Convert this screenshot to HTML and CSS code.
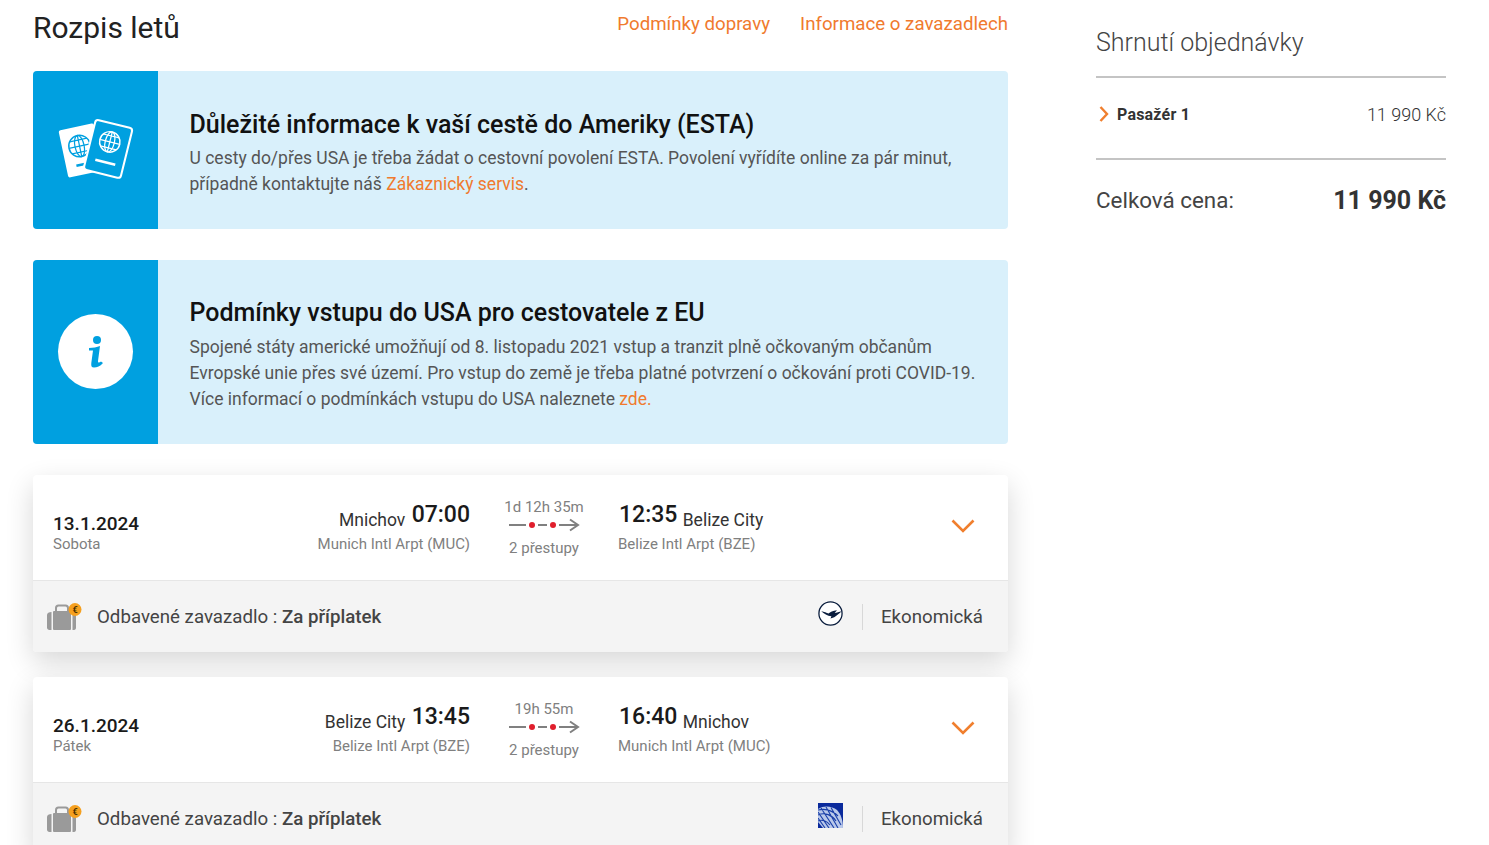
FILE: index.html
```html
<!doctype html>
<html>
<head>
<title>Rozpis letů</title>
<meta charset="UTF-8">
<link rel="stylesheet" href="styles.css">
</head>
<body>

<svg class="defs" width="0" height="0">
  <symbol id="bag" viewBox="0 0 36 28">
    <path d="M10 8V5C10 3.500 11 2.500 12.500 2.500h7C21 2.500 22 3.500 22 5V8" fill="none" stroke="#9a9a9a" stroke-width="2"/>
    <rect x="7" y="8" width="18" height="19" rx="1" fill="#9a9a9a"/>
    <path d="M5.500 9V27H3.500C2 27 1 26 1 24.500V12C1 10 3 9 5.500 9zM26.500 9V27h1.500C29.500 27 30 26 30 24.500V12C30 10 28.500 9 26.500 9z" fill="#9a9a9a"/>
    <circle cx="29" cy="6.500" r="6.500" fill="#f5a01f"/>
  </symbol>
  <symbol id="route" viewBox="0 0 72 14">
    <path d="M1 7h17M30 7h9M51 7h19M62 1.500 70 7l-8 5.500" fill="none" stroke="#808080" stroke-width="2"/>
    <circle cx="24" cy="7" r="3" fill="#e01f2d"/>
    <circle cx="45" cy="7" r="3" fill="#e01f2d"/>
  </symbol>
  <symbol id="chevron" viewBox="0 0 24 14">
    <path d="M1.500 1.500 12 12 22.500 1.500" fill="none" stroke="#f07f2e" stroke-width="2.600"/>
  </symbol>
</svg>

<div class="page">

  <main class="flights">

    <header class="head">
      <h1>Rozpis letů</h1>
      <nav class="head-links">
        <a href="#">Podmínky dopravy</a>
        <a href="#">Informace o zavazadlech</a>
      </nav>
    </header>

    <section class="notice notice-esta">
      <div class="notice-icon">
        <svg class="passports" width="78" height="66" viewBox="0 0 76 64">
          <g transform="translate(1 0) rotate(-12 22 34)">
            <rect x="5" y="10" width="35" height="47" rx="2" fill="#fff"/>
            <circle cx="22" cy="29" r="10.500" fill="none" stroke="#00a0e0" stroke-width="1.400"/>
            <ellipse cx="22" cy="29" rx="4.500" ry="10.500" fill="none" stroke="#00a0e0" stroke-width="1.200"/>
            <path d="M11.500 29h21M13.500 23h17M13.500 35h17M22 18.500v21" stroke="#00a0e0" stroke-width="1.200"/>
            <rect x="15" y="46" width="14" height="2.500" fill="#00a0e0"/>
          </g>
          <g transform="translate(-3 0) rotate(14 53 33)">
            <rect x="34" y="7" width="37" height="50" rx="3" fill="#00a0e0" stroke="#fff" stroke-width="2"/>
            <circle cx="52.500" cy="25" r="10" fill="none" stroke="#fff" stroke-width="1.400"/>
            <ellipse cx="52.500" cy="25" rx="4.500" ry="10" fill="none" stroke="#fff" stroke-width="1.200"/>
            <path d="M42.500 25h20M44.500 19h16M44.500 31h16M52.500 15v20" stroke="#fff" stroke-width="1.200"/>
            <rect x="43" y="44" width="20" height="2.500" fill="#fff"/>
          </g>
        </svg>
      </div>
      <div class="notice-body">
        <h2>Důležité informace k vaší cestě do Ameriky (ESTA)</h2>
        <p>U cesty do/přes USA je třeba žádat o cestovní povolení ESTA. Povolení vyřídíte online za pár minut, případně kontaktujte náš <a href="#">Zákaznický servis</a>.</p>
      </div>
    </section>

    <section class="notice notice-entry">
      <div class="notice-icon">
        <div class="info-circle">
          <svg width="18" height="33" viewBox="0 0 18 33">
            <circle cx="10" cy="5" r="4" fill="#00a0e0"/>
            <path d="M2 13C6 13 10 12 13 11L11 26C11 28 12 28 14 26.500L16 28C13 31.500 10 32.500 7 32.500 4.500 32.500 4 31 4.300 28L6 15.500H2z" fill="#00a0e0"/>
          </svg>
        </div>
      </div>
      <div class="notice-body">
        <h2>Podmínky vstupu do USA pro cestovatele z EU</h2>
        <p>Spojené státy americké umožňují od 8. listopadu 2021 vstup a tranzit plně očkovaným občanům Evropské unie přes své území. Pro vstup do země je třeba platné potvrzení o očkování proti COVID&#8209;19. Více informací o podmínkách vstupu do USA naleznete <a href="#">zde.</a></p>
      </div>
    </section>

    <article class="flight">
      <div class="flight-main">
        <div class="flight-date">
          <strong>13.1.2024</strong>
          <span>Sobota</span>
        </div>
        <div class="stop stop-from">
          <div class="stop-line">Mnichov <b>07:00</b></div>
          <span>Munich Intl Arpt (MUC)</span>
        </div>
        <div class="route">
          <span>1d 12h 35m</span>
          <svg width="72" height="14"><use href="#route"/></svg>
          <span>2 přestupy</span>
        </div>
        <div class="stop">
          <div class="stop-line"><b>12:35</b> Belize City</div>
          <span>Belize Intl Arpt (BZE)</span>
        </div>
        <svg class="chevron" width="24" height="14"><use href="#chevron"/></svg>
      </div>
      <div class="flight-foot">
        <svg class="bag" width="36" height="28"><use href="#bag"/><text x="29" y="9.500" class="bag-euro">€</text></svg>
        <div class="baggage">Odbavené zavazadlo : <b>Za příplatek</b></div>
        <svg class="airline" width="25" height="25" viewBox="0 0 27 27">
          <circle cx="13.500" cy="13.500" r="12.500" fill="#fff" stroke="#0a1d3d" stroke-width="1.400"/>
          <path d="M3.500 11C7 11.500 9 12.500 11.500 13.500 13 12 16 10.500 20.500 10L18 13C20 12.500 23 11.500 25.500 11 23 13.500 20 16 17.500 17.500L13.500 19 14.500 16.500C10 16 6.500 13.500 3.500 11z" fill="#0a1d3d"/>
        </svg>
        <div class="cabin">Ekonomická</div>
      </div>
    </article>

    <article class="flight">
      <div class="flight-main">
        <div class="flight-date">
          <strong>26.1.2024</strong>
          <span>Pátek</span>
        </div>
        <div class="stop stop-from">
          <div class="stop-line">Belize City <b>13:45</b></div>
          <span>Belize Intl Arpt (BZE)</span>
        </div>
        <div class="route">
          <span>19h 55m</span>
          <svg width="72" height="14"><use href="#route"/></svg>
          <span>2 přestupy</span>
        </div>
        <div class="stop">
          <div class="stop-line"><b>16:40</b> Mnichov</div>
          <span>Munich Intl Arpt (MUC)</span>
        </div>
        <svg class="chevron" width="24" height="14"><use href="#chevron"/></svg>
      </div>
      <div class="flight-foot">
        <svg class="bag" width="36" height="28"><use href="#bag"/><text x="29" y="9.500" class="bag-euro">€</text></svg>
        <div class="baggage">Odbavené zavazadlo : <b>Za příplatek</b></div>
        <svg class="airline" width="25" height="25" viewBox="0 0 25 25">
          <rect width="25" height="25" fill="#0a2a9c"/>
          <path d="M0 6C6 2 14 3 19 7 23 11 25 18 25 25H0z" fill="#b9c8ea"/>
          <path d="M0 9 11 25M0 15 7 25M3 5 16 25M8 4 20 25M13 4.500 23 22M0 7C8 5 15 8 20 13M0 12C7 9 14 12 18 18M0 18C4 16 9 18 12 22" stroke="#1a3fa8" stroke-width="1.100" fill="none"/>
          <path d="M0 19 5 25H0z" fill="#0a2a9c"/>
        </svg>
        <div class="cabin">Ekonomická</div>
      </div>
    </article>

  </main>

  <aside class="summary">
    <h3>Shrnutí objednávky</h3>
    <div class="summary-row">
      <svg width="10" height="16" viewBox="0 0 10 16"><path d="M1.500 1 8 8l-6.500 7" fill="none" stroke="#f07f2e" stroke-width="2.400"/></svg>
      <b>Pasažér 1</b>
      <span>11 990 Kč</span>
    </div>
    <div class="summary-total">
      <span>Celková cena:</span>
      <b>11 990 Kč</b>
    </div>
  </aside>

</div>

</body>
</html>
```

FILE: styles.css
```css
html, body {
  height: 100%;
  overflow: hidden;
}

body {
  margin: 0;
  font-family: Roboto, sans-serif;
  color: #555;
  background: white;
}

a {
  color: #f07a2e;
  text-decoration: none;
}

.defs {
  position: absolute;
}

.bag-euro {
  font-size: 9px;
  font-weight: 700;
  text-anchor: middle;
  fill: #4a3000;
}

.page {
  display: flex;
  align-items: flex-start;
  padding-left: 33px;
}

.flights {
  width: 975px;
  flex: none;
}

.head {
  display: flex;
  justify-content: space-between;
  height: 71px;
}

.head h1 {
  margin: 10px 0 0;
  font-size: 30px;
  line-height: 36px;
  font-weight: 400;
  color: #222;
}

.head-links {
  display: flex;
  gap: 30px;
  padding-top: 12px;
  font-size: 18.700px;
  line-height: 24px;
}

.notice {
  display: flex;
  margin-bottom: 31px;
  background: #d9f0fb;
  border-radius: 4px;
  overflow: hidden;
}

.notice-esta {
  height: 158px;
}

.notice-entry {
  height: 184px;
}

.notice-icon {
  width: 125px;
  flex: none;
  display: flex;
  align-items: center;
  justify-content: center;
  background: #00a0e0;
}

.passports {
  margin-top: -2px;
}

.info-circle {
  width: 75px;
  height: 75px;
  margin-top: -2px;
  display: flex;
  align-items: center;
  justify-content: center;
  border-radius: 50%;
  background: white;
}

.notice-body {
  padding: 5px 32px 0 31.500px;
  display: flex;
  flex-direction: column;
  justify-content: center;
}

.notice-entry .notice-body {
  padding-top: 4px;
}

.notice-body h2 {
  margin: 0 0 3px;
  font-size: 25px;
  line-height: 34px;
  font-weight: 500;
  color: #111;
}

.notice-entry h2 {
  margin-bottom: 4px;
}

.notice-body p {
  margin: 0;
  font-size: 17.500px;
  line-height: 26px;
  color: #555;
}

.flight {
  margin-bottom: 25px;
  background: white;
  border-radius: 4px;
  overflow: hidden;
  box-shadow: 0 10px 28px rgba(0, 0, 0, 0.16);
}

.flight-main {
  box-sizing: border-box;
  display: flex;
  align-items: center;
  height: 106px;
  border-bottom: 1px solid #e6e6e6;
}

.flight-date {
  width: 160px;
  margin: 12px 0 0 20px;
  font-size: 15px;
  line-height: 20px;
  color: #808080;
}

.flight-date strong {
  display: block;
  font-size: 19px;
  line-height: 21px;
  font-weight: 500;
  color: #1a1a1a;
}

.stop {
  width: 240px;
  margin-top: 1px;
  font-size: 15px;
  line-height: 20px;
  color: #808080;
}

.stop-from {
  width: 257px;
  text-align: right;
}

.stop-line {
  font-size: 17.500px;
  line-height: 28px;
  color: #333;
}

.stop-line b {
  margin: 0 1px;
  vertical-align: 4px;
  font-size: 23px;
  line-height: 1;
  font-weight: 500;
  color: #1a1a1a;
}

.stop-from .stop-line b {
  margin: 0 0 0 2px;
}

.route {
  width: 148px;
  display: flex;
  flex-direction: column;
  align-items: center;
  font-size: 15px;
  line-height: 20px;
  color: #808080;
}

.route svg {
  margin: 1px 0 6px;
}

.chevron {
  margin: -4px 0 0 93px;
}

.flight-foot {
  display: flex;
  align-items: center;
  height: 71px;
  padding: 0 25px 0 13px;
  background: #f4f4f4;
  font-size: 18.700px;
  color: #444;
}

.bag {
  margin-right: 15px;
}

.baggage {
  flex: 1;
}

.baggage b {
  font-weight: 500;
}

.airline {
  margin-top: -7px;
}

.cabin {
  margin-left: 19px;
  padding-left: 18px;
  border-left: 1px solid #d8d8d8;
  line-height: 26px;
}

.summary {
  width: 350px;
  margin-left: 88px;
  padding-top: 25px;
}

.summary h3 {
  margin: 0;
  height: 51px;
  border-bottom: 2px solid #c4c4c4;
  font-size: 25px;
  line-height: 36px;
  font-weight: 300;
  color: #444;
}

.summary-row {
  display: flex;
  align-items: center;
  height: 72px;
  padding: 0 0 8px 3px;
  border-bottom: 2px solid #c4c4c4;
  font-size: 18px;
}

.summary-row b {
  margin-left: 8px;
  flex: 1;
  font-size: 16px;
  letter-spacing: 0.2px;
  font-weight: 700;
  color: #333;
}

.summary-row span {
  font-weight: 300;
  color: #333;
}

.summary-total {
  display: flex;
  justify-content: space-between;
  align-items: center;
  height: 80px;
  font-size: 22.400px;
  color: #444;
}

.summary-total b {
  font-size: 25px;
  font-weight: 700;
  color: #333;
}
```
